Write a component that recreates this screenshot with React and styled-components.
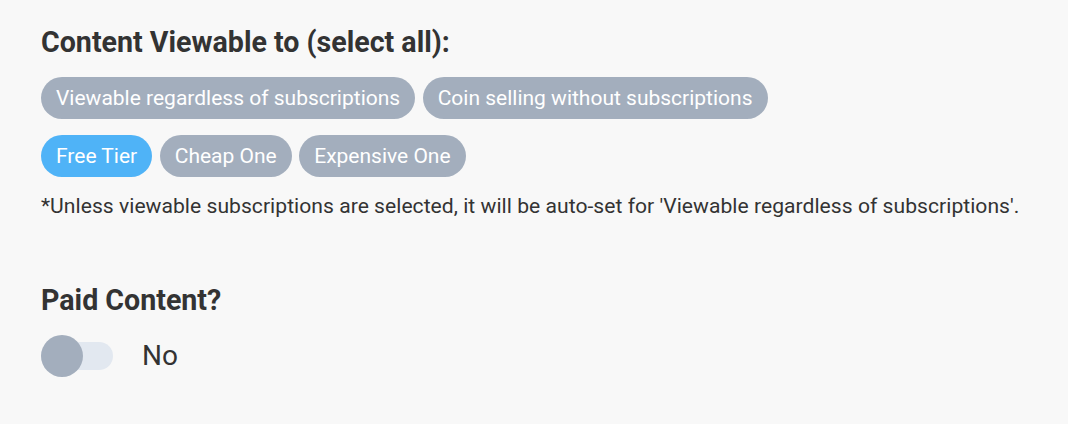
import React, { useState } from 'react';
import styled, { createGlobalStyle } from 'styled-components';

// global
const GlobalStyle = createGlobalStyle`
  body {
    margin: 0;
    background: #f8f8f8;
    font-family: Roboto, 'Liberation Sans', sans-serif;
    color: #333;
  }
`;

// style
const PageStyle = styled.main`
  padding: 25px 41px;
  display: grid;
  grid-auto-rows: min-content;
`;

const SectionStyle = styled.section`
  display: grid;
  grid-auto-rows: min-content;
`;

const HeaderStyle = styled.h2`
  margin: 0 0 18px;
  font-size: 28.6px;
  font-weight: 700;
  line-height: 34px;
  color: #333;
`;

const ChipRowStyle = styled.div`
  display: flex;
  flex-wrap: wrap;
  gap: 7.5px;
  margin-bottom: 16px;
`;

const ChipStyle = styled.button`
  border: none;
  border-radius: 999px;
  padding: 0 15px;
  height: 42px;
  font-family: inherit;
  font-size: 21px;
  color: #fff;
  cursor: pointer;
  background: ${({ active }) => (active ? '#4fb3f7' : '#a3aebd')};
`;

const NoteStyle = styled.p`
  margin: 0;
  font-size: 21.1px;
  line-height: 25px;
  letter-spacing: 0.03px;
  color: #333;
`;

const PaidSectionStyle = styled(SectionStyle)`
  margin-top: 65px;
`;

const ToggleRowStyle = styled.label`
  display: flex;
  align-items: center;
  gap: 29px;
  cursor: pointer;
`;

const TrackStyle = styled.span`
  position: relative;
  display: inline-block;
  width: 72px;
  height: 28px;
  border-radius: 14px;
  background: #e2e8f0;
`;

const KnobStyle = styled.span`
  position: absolute;
  top: -7px;
  left: ${({ on }) => (on ? '30px' : '0')};
  width: 42px;
  height: 42px;
  border-radius: 50%;
  background: ${({ on }) => (on ? '#4fb3f7' : '#a3aebd')};
`;

const ToggleTextStyle = styled.span`
  font-size: 28px;
  line-height: 42px;
  color: #333;
`;

const general = [
  'Viewable regardless of subscriptions',
  'Coin selling without subscriptions',
];
const tiers = ['Free Tier', 'Cheap One', 'Expensive One'];

const App = () => {
  const [selected, setSelected] = useState(['Free Tier']);
  const [paid, setPaid] = useState(false);

  const toggle = (name) =>
    setSelected((s) =>
      s.includes(name) ? s.filter((n) => n !== name) : [...s, name]
    );

  return (
    <PageStyle>
      <GlobalStyle />
      <SectionStyle>
        <HeaderStyle>Content Viewable to (select all):</HeaderStyle>
        <ChipRowStyle>
          {general.map((name) => (
            <ChipStyle
              key={name}
              active={selected.includes(name)}
              onClick={() => toggle(name)}
            >
              {name}
            </ChipStyle>
          ))}
        </ChipRowStyle>
        <ChipRowStyle>
          {tiers.map((name) => (
            <ChipStyle
              key={name}
              active={selected.includes(name)}
              onClick={() => toggle(name)}
            >
              {name}
            </ChipStyle>
          ))}
        </ChipRowStyle>
        <NoteStyle>
          *Unless viewable subscriptions are selected, it will be auto-set for
          'Viewable regardless of subscriptions'.
        </NoteStyle>
      </SectionStyle>
      <PaidSectionStyle>
        <HeaderStyle>Paid Content?</HeaderStyle>
        <ToggleRowStyle onClick={() => setPaid(!paid)}>
          <TrackStyle>
            <KnobStyle on={paid} />
          </TrackStyle>
          <ToggleTextStyle>{paid ? 'Yes' : 'No'}</ToggleTextStyle>
        </ToggleRowStyle>
      </PaidSectionStyle>
    </PageStyle>
  );
};

export default App;
